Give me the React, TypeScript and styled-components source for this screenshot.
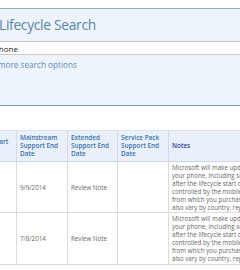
import styled, { createGlobalStyle } from 'styled-components';

const GlobalStyle = createGlobalStyle`
	html, body {
		margin: 0;
		padding: 0;
		background: #ffffff;
		overflow: hidden;
	}
	body {
		font-family: 'Open Sans', 'Noto Sans', sans-serif;
	}
`;

interface SupportRow {
	start: string;
	mainstream: string;
	extended: string;
	servicePack: string;
	notes: string[];
}

const notes = [
	'Microsoft will make updates available for',
	'your phone, including security updates,',
	'after the lifecycle start date; availability is',
	'controlled by the mobile operator or retailer',
	'from which you purchased the phone and may',
	'also vary by country, region and hardware.',
];

const rows: SupportRow[] = [
	{ start: '10/29/2012', mainstream: '9/9/2014', extended: 'Review Note', servicePack: '', notes },
	{ start: '10/8/2012', mainstream: '7/8/2014', extended: 'Review Note', servicePack: '', notes },
];

export const App = () => (
	<Page>
		<GlobalStyle />
		<SearchPanel>
			<Title>Lifecycle Search</Title>
			<SearchBox readOnly value="Phone" />
			<MoreLink href="#">more search options</MoreLink>
		</SearchPanel>

		<Results>
			<colgroup>
				<col style={{ width: 55 }} />
				<col style={{ width: 51 }} />
				<col style={{ width: 50 }} />
				<col style={{ width: 51 }} />
				<col />
			</colgroup>
			<thead>
				<tr>
					<HeadCell>
						Lifecycle Start
						<br />
						Date
					</HeadCell>
					<HeadCell>Mainstream Support End Date</HeadCell>
					<HeadCell>Extended Support End Date</HeadCell>
					<HeadCell>Service Pack Support End Date</HeadCell>
					<HeadCell $sorted>Notes</HeadCell>
				</tr>
			</thead>
			<tbody>
				{rows.map((row, i) => (
					<tr key={i}>
						<Cell>{row.start}</Cell>
						<Cell>{row.mainstream}</Cell>
						<Cell>{row.extended}</Cell>
						<Cell>{row.servicePack}</Cell>
						<NotesCell>
							{row.notes.map((line) => (
								<NoteLine key={line}>{line}</NoteLine>
							))}
						</NotesCell>
					</tr>
				))}
			</tbody>
		</Results>
	</Page>
);
export default App;

const Page = styled.div`
	padding-top: 8px;
	width: 240px;
`;

const SearchPanel = styled.div`
	display: flex;
	flex-direction: column;
	align-items: flex-start;
	height: 96px;
	background: #eef4fc;
	border-top: 1px solid #8daeb0;
	border-bottom: 1px solid #789fa4;
`;

const Title = styled.div`
	margin: 6px 0 0 -1px;
	font-family: 'Open Sans', sans-serif;
	font-size: 13.8px;
	line-height: 20px;
	color: #5485b2;
	letter-spacing: -0.3px;
	white-space: nowrap;
`;

const SearchBox = styled.input`
	box-sizing: border-box;
	margin: 6px 0 0 -12px;
	width: 270px;
	height: 14px;
	padding: 0 0 0 6px;
	border: none;
	border-top: 1px solid #c4c4c4;
	border-bottom: 1px solid #c9c9c9;
	background: #fefefe;
	font-family: 'Open Sans', sans-serif;
	font-size: 8px;
	color: #222;
	outline: none;
`;

const MoreLink = styled.a`
	margin: 4px 0 0 -2px;
	font-size: 8.2px;
	line-height: 12px;
	color: #5a8cc6;
	text-decoration: none;
`;

const Results = styled.table`
	margin: 24px 0 0 -39px;
	width: 460px;
	table-layout: fixed;
	border-collapse: collapse;
	border-top: 1px solid #dde4ee;
	border-bottom: 1px solid #d8d8d8;
`;

const HeadCell = styled.th<{ $sorted?: boolean }>`
	height: 28px;
	padding: 1px 3px;
	background: #e9f0fb;
	border-left: 1px solid #d6dbe3;
	border-bottom: 1px solid #cfd6e0;
	text-align: left;
	vertical-align: middle;
	font-size: 6.4px;
	line-height: 8px;
	font-weight: 600;
	color: ${({ $sorted }) => ($sorted ? '#3a3aa6' : '#3572b6')};
`;

const Cell = styled.td`
	padding: 2px 3px 1px;
	border-left: 1px solid #dcdcdc;
	border-bottom: 1px solid #dcdcdc;
	vertical-align: middle;
	font-size: 6.2px;
	line-height: 8px;
	color: #666;
	white-space: nowrap;
`;

const NotesCell = styled(Cell)`
	vertical-align: top;
	overflow: hidden;
`;

const NoteLine = styled.div`
	line-height: 7.9px;
`;
